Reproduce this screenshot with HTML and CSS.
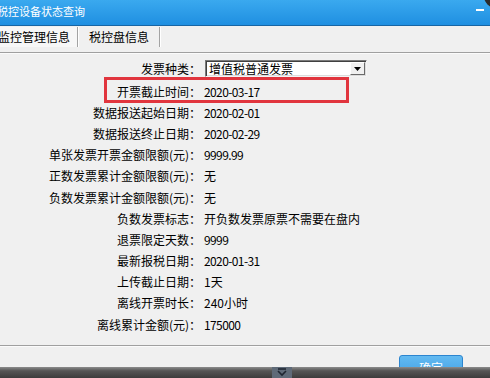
FILE: index.html
```html
<!DOCTYPE html>
<html lang="zh-CN">
<head>
<meta charset="utf-8">
<title>税控设备状态查询</title>
<link rel="stylesheet" href="styles.css">
</head>
<body>
<div class="dialog">
  <div class="titlebar">
    <span class="title">税控设备状态查询</span>
    <span class="min"></span>
    <span class="knob"></span>
  </div>
  <div class="tabs">
    <div class="tab active">监控管理信息</div>
    <div class="tab second">税控盘信息</div>
  </div>
  <div class="panel">
    <div class="row first">
      <span class="label">发票种类：</span>
      <div class="select">
        <span class="select-text">增值税普通发票</span>
        <span class="select-btn"><svg width="7" height="4" viewBox="0 0 7 4"><path d="M0 0H7L3.5 4Z" fill="#000"/></svg></span>
      </div>
    </div>
    <div class="row">
      <span class="label">开票截止时间：</span>
      <span class="value num">2020-03-17</span>
      <span class="mark"></span>
    </div>
    <div class="row">
      <span class="label">数据报送起始日期：</span>
      <span class="value num">2020-02-01</span>
    </div>
    <div class="row">
      <span class="label">数据报送终止日期：</span>
      <span class="value num">2020-02-29</span>
    </div>
    <div class="row">
      <span class="label">单张发票开票金额限额(元)：</span>
      <span class="value num">9999.99</span>
    </div>
    <div class="row">
      <span class="label">正数发票累计金额限额(元)：</span>
      <span class="value">无</span>
    </div>
    <div class="row">
      <span class="label">负数发票累计金额限额(元)：</span>
      <span class="value">无</span>
    </div>
    <div class="row">
      <span class="label">负数发票标志：</span>
      <span class="value">开负数发票原票不需要在盘内</span>
    </div>
    <div class="row">
      <span class="label">退票限定天数：</span>
      <span class="value num">9999</span>
    </div>
    <div class="row">
      <span class="label">最新报税日期：</span>
      <span class="value num">2020-01-31</span>
    </div>
    <div class="row">
      <span class="label">上传截止日期：</span>
      <span class="value">1天</span>
    </div>
    <div class="row">
      <span class="label">离线开票时长：</span>
      <span class="value">240小时</span>
    </div>
    <div class="row">
      <span class="label">离线累计金额(元)：</span>
      <span class="value num">175000</span>
    </div>
  </div>
  <div class="footer">
    <button class="ok">确定</button>
  </div>
</div>
<div class="taskbar">
  <span class="tb-icon"><svg width="10" height="9" viewBox="0 0 10 9"><path d="M1 1H9M1 3L5 7L9 3" stroke="#1e2530" stroke-width="1.6" fill="none"/></svg></span>
</div>
</body>
</html>
```

FILE: styles.css
```css
* { box-sizing: border-box; }
html, body { margin: 0; padding: 0; }
body {
  width: 490px;
  height: 378px;
  overflow: hidden;
  background: #f0f0f0;
  font-family: "Noto Sans CJK SC", "Microsoft YaHei", sans-serif;
  font-size: 12px;
  color: #000;
}
.dialog {
  height: 367px;
  overflow: hidden;
  background: #f0f0f0;
}
.titlebar {
  position: relative;
  height: 26px;
  display: flex;
  align-items: flex-start;
  background: linear-gradient(#3aa9ef, #1f8fe1);
  border-bottom: 1px solid #1765a4;
  color: #fff;
  overflow: hidden;
}
.title {
  font-size: 11px;
  line-height: 13px;
  margin-top: 5px;
  margin-left: -3px;
}
.min {
  margin-left: auto;
  margin-right: 6px;
  margin-top: 9px;
  width: 8px;
  height: 2px;
  background: #fff;
}
.knob {
  position: absolute;
  right: -18px;
  top: -16px;
  width: 24px;
  height: 24px;
  border-radius: 50%;
  background: #2b2b2b;
}
.tabs {
  height: 26px;
  display: flex;
  align-items: flex-start;
  padding-top: 1px;
}
.tab {
  height: 20px;
  line-height: 20px;
  border-right: 1px solid #a3a3a3;
  box-shadow: 1px 0 0 #fff;
  white-space: nowrap;
}
.tab.active {
  margin-left: -4px;
  width: 82px;
  padding-left: 2px;
  background: #f7f7f7;
}
.tab.second {
  width: 82px;
  padding-left: 11px;
}
.panel {
  border-top: 1px solid #a0a0a0;
  box-shadow: inset 0 1px 0 #fbfbfb;
  padding: 5px 0 9.6px;
}
.row {
  position: relative;
  display: grid;
  grid-template-columns: 201px auto;
  column-gap: 3px;
  align-items: center;
  height: 21.2px;
  line-height: 14px;
}
.row.first {
  height: 21px;
  margin-bottom: 2px;
}
.label {
  text-align: right;
  white-space: nowrap;
}
.value { white-space: nowrap; }
.num { letter-spacing: -0.6px; }
.select {
  margin-left: 1px;
  width: 162px;
  height: 17px;
  display: flex;
  background: #fff;
  border: 1px solid;
  border-color: #7a7a7a #f4f4f4 #f4f4f4 #7a7a7a;
  box-shadow: inset 1px 1px 0 #404040, inset -1px -1px 0 #dcdcdc;
}
.select-text {
  flex: 1;
  padding-left: 3px;
  padding-top: 1px;
  line-height: 14px;
}
.select-btn {
  width: 15px;
  height: 13px;
  margin: 1px 1px 1px 0;
  display: flex;
  align-items: center;
  justify-content: center;
  background: #f0f0f0;
  border: 1px solid;
  border-color: #fff #6a6a6a #6a6a6a #fff;
}
.mark {
  position: absolute;
  left: 104px;
  top: -4px;
  width: 245px;
  height: 26px;
  border: 3px solid #e1353e;
}
.footer {
  border-top: 1px solid #a0a0a0;
  box-shadow: inset 0 1px 0 #fbfbfb;
  display: flex;
  justify-content: flex-end;
  padding: 9px 27px 0 0;
}
.ok {
  width: 64px;
  height: 26px;
  border: 1px solid #2c85cf;
  border-radius: 3px;
  background: linear-gradient(#63baf1, #3d9de3);
  color: #fff;
  font-family: "Noto Sans CJK SC", sans-serif;
  font-size: 12px;
  padding: 0;
}
.taskbar {
  height: 11px;
  display: flex;
  background: linear-gradient(#8c8c8c, #555 35%, #3c3c3c);
}
.tb-icon {
  margin-left: 272px;
  width: 20px;
  height: 11px;
  display: flex;
  justify-content: center;
  padding-top: 1px;
  background: #5f6a78;
}
```
